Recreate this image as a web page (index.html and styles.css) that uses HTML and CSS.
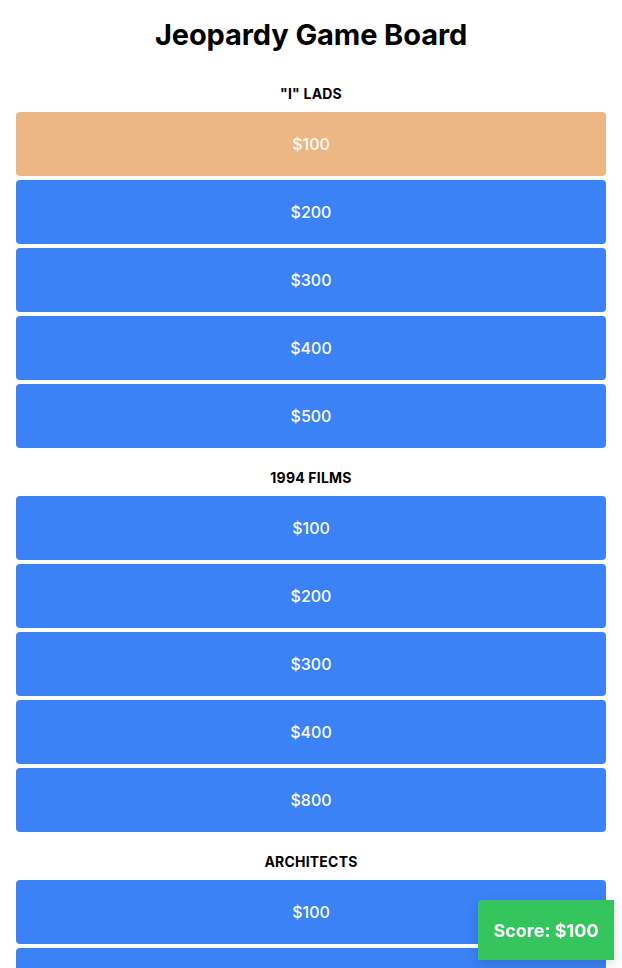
FILE: index.html
```html
<!DOCTYPE html>
<html>
<head>
<meta charset="utf-8">
<link rel="stylesheet" href="styles.css">
</head>
<body>
<div class="page">
  <h1 class="title">Jeopardy Game Board</h1>
  <div class="board">
    <section class="category">
      <h2 class="cat-title">"I" LADS</h2>
      <div class="clues">
        <button class="clue clue-active">$100</button>
        <button class="clue">$200</button>
        <button class="clue">$300</button>
        <button class="clue">$400</button>
        <button class="clue">$500</button>
      </div>
    </section>
    <section class="category">
      <h2 class="cat-title">1994 FILMS</h2>
      <div class="clues">
        <button class="clue">$100</button>
        <button class="clue">$200</button>
        <button class="clue">$300</button>
        <button class="clue">$400</button>
        <button class="clue">$800</button>
      </div>
    </section>
    <section class="category">
      <h2 class="cat-title">ARCHITECTS</h2>
      <div class="clues">
        <button class="clue">$100</button>
        <button class="clue">$200</button>
        <button class="clue">$300</button>
        <button class="clue">$400</button>
        <button class="clue">$500</button>
      </div>
    </section>
  </div>
</div>
<div class="score">Score: $100</div>
</body>
</html>
```
FILE: styles.css
```css
* { box-sizing: border-box; }
html, body { margin: 0; padding: 0; background: #ffffff; }
body { font-family: Inter, "Noto Sans", sans-serif; color: #000; }
.page { padding: 16px 16px 16px; }
.title {
  margin: 0;
  text-align: center;
  font-size: 29px;
  line-height: 38px;
  font-weight: 700;
  letter-spacing: -0.1px;
}
.board { display: flex; flex-direction: column; gap: 20px; margin-top: 30px; }
.category { display: flex; flex-direction: column; }
.cat-title {
  margin: 0 0 8px;
  text-align: center;
  font-size: 14px;
  line-height: 20px;
  font-weight: 700;
  letter-spacing: 0.2px;
}
.clues { display: flex; flex-direction: column; gap: 4px; }
.clue {
  display: block;
  width: 100%;
  height: 64px;
  border: none;
  border-radius: 4px;
  background: #3b82f6;
  color: #ffffff;
  font-family: Inter, "Noto Sans", sans-serif;
  font-size: 16px;
  font-weight: 500;
  padding: 0;
  cursor: pointer;
}
.clue-active { background: #ecb685; }
.score {
  position: fixed;
  right: 8px;
  bottom: 8px;
  width: 136px;
  height: 60px;
  display: flex;
  align-items: center;
  justify-content: center;
  background: #35c55f;
  color: #ffffff;
  font-size: 18px;
  font-weight: 700;
  border-radius: 4px 0 0 0;
  box-shadow: 0 4px 12px rgba(0,0,0,0.15);
}
```
